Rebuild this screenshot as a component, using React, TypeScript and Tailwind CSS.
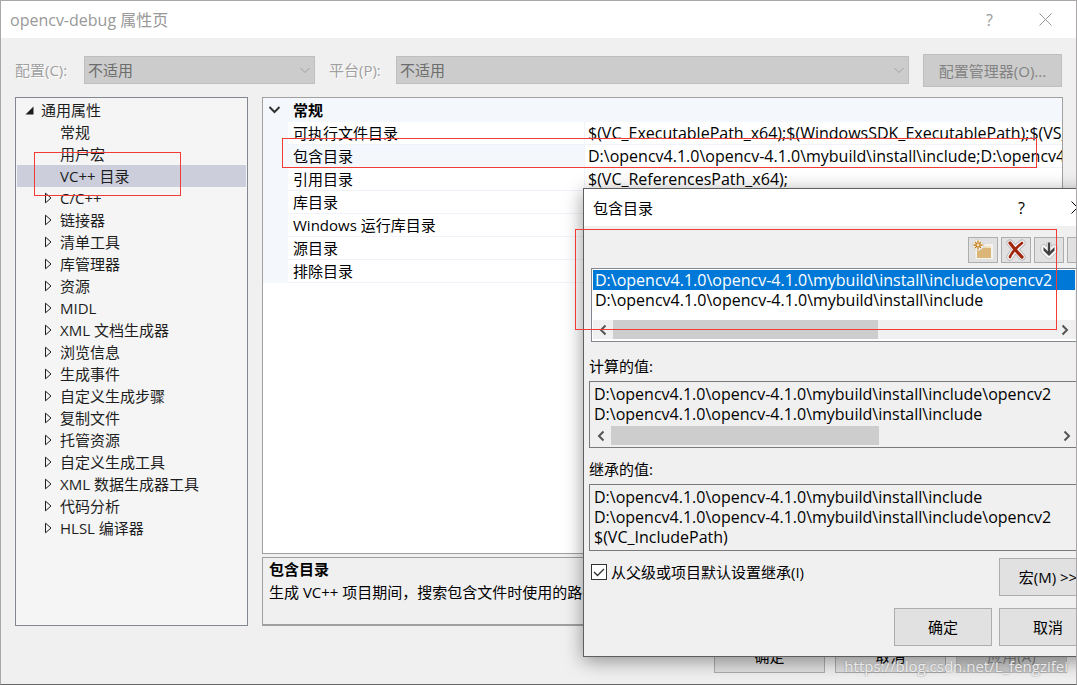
import React, { useState } from 'react';
import clsx from 'clsx';

const TREE_ITEMS = [
  { label: '常规', leaf: true },
  { label: '用户宏', leaf: true },
  { label: 'VC++ 目录', leaf: true },
  { label: 'C/C++' },
  { label: '链接器' },
  { label: '清单工具' },
  { label: '库管理器' },
  { label: '资源' },
  { label: 'MIDL' },
  { label: 'XML 文档生成器' },
  { label: '浏览信息' },
  { label: '生成事件' },
  { label: '自定义生成步骤' },
  { label: '复制文件' },
  { label: '托管资源' },
  { label: '自定义生成工具' },
  { label: 'XML 数据生成器工具' },
  { label: '代码分析' },
  { label: 'HLSL 编译器' },
];

const INCLUDE = 'D:\\opencv4.1.0\\opencv-4.1.0\\mybuild\\install\\include';
const INCLUDE_CV2 = `${INCLUDE}\\opencv2`;

const PROPERTIES = [
  { name: '可执行文件目录', value: '$(VC_ExecutablePath_x64);$(WindowsSDK_ExecutablePath);$(VS_ExecutablePath)' },
  { name: '包含目录', value: `${INCLUDE};${INCLUDE_CV2}` },
  { name: '引用目录', value: '$(VC_ReferencesPath_x64);' },
  { name: '库目录', value: '' },
  { name: 'Windows 运行库目录', value: '' },
  { name: '源目录', value: '' },
  { name: '排除目录', value: '' },
];

const CloseIcon = () => (
  <svg width="13" height="13" viewBox="0 0 13 13" fill="none" stroke="currentColor">
    <path d="M0.5 0.5l12 12M12.5 0.5l-12 12" />
  </svg>
);

const FolderIcon = () => (
  <svg width="22" height="22" viewBox="0 0 22 22">
    <path d="M3 8h9l1-3h8v15H4z" fill="#f6f3ee" />
    <path d="M5 9h7l2-2h5v12H5z" fill="#dcb679" />
    <path d="M14 7h5v2h-6z" fill="#f3e2c2" />
    <circle cx="6" cy="6" r="5.5" fill="#f6f3ee" stroke="#c9c4bb" strokeWidth="0.6" />
    <path d="M6 1.5v9M1.5 6h9M3 3l6 6M9 3L3 9" stroke="#c27d1a" strokeWidth="1.3" />
    <circle cx="6" cy="6" r="1.4" fill="#f6e3c0" />
  </svg>
);

const DeleteIcon = () => (
  <svg width="22" height="22" viewBox="0 0 22 22" fill="none" strokeLinecap="round">
    <path d="M5 4l12 14M17 4C12 8 8 12 5 18" stroke="#b5b5b5" strokeWidth="7" />
    <path d="M5 4l12 14M17 4C12 8 8 12 5 18" stroke="#f5f5f5" strokeWidth="5.4" />
    <path d="M5 4c3 4 7 9 12 14" stroke="#a1260d" strokeWidth="3.2" />
    <path d="M17 4C12 8 7 12 5 18" stroke="#a1260d" strokeWidth="2.6" />
  </svg>
);

const ArrowDownIcon = () => (
  <svg width="18" height="22" viewBox="0 0 18 22">
    <path
      d="M9 4v11M3.5 8.5v3L9 17l5.5-5.5v-3L9 14z"
      fill="#f5f5f5"
      stroke="#b5b5b5"
      strokeWidth="6"
      strokeLinejoin="round"
    />
    <path d="M9 4v11M3.5 8.5v3L9 17l5.5-5.5v-3L9 14z" fill="#f5f5f5" stroke="#f5f5f5" strokeWidth="4.6" strokeLinejoin="round" />
    <path d="M9 3.5v11" stroke="#424242" strokeWidth="2.4" />
    <path d="M3.5 8v3.5L9 17l5.5-5.5V8L9 13.5z" fill="#424242" />
  </svg>
);

const ArrowUpIcon = () => (
  <svg width="16" height="22" viewBox="0 0 16 22" fill="none">
    <path d="M8 19V7" stroke="#c0c0c0" strokeWidth="2.2" />
    <path d="M3 14v-3l5-5 5 5v3L8 9z" fill="#c0c0c0" />
  </svg>
);

const Chevron: React.FC<{ d: string }> = ({ d }) => (
  <svg width="10" height="12" viewBox="0 0 10 12" fill="none" stroke="#555" strokeWidth="2">
    <path d={d} />
  </svg>
);

const DisabledSelect: React.FC<{ id: string; className?: string }> = ({ id, className }) => (
  <div className={clsx('relative mt-[2px]', className)}>
    <select
      id={id}
      disabled
      className="block h-7 w-full appearance-none border border-[#bfbfbf] bg-[#cccccc] pl-[3px] text-[#6d6d6d] opacity-100"
    >
      <option>不适用</option>
    </select>
    <svg className="absolute right-1 top-2" width="12" height="12" viewBox="0 0 12 12" fill="none" stroke="#a0a0a0">
      <path d="M1.5 4l4.5 4.5L10.5 4" />
    </svg>
  </div>
);

const DialogButton: React.FC<React.ButtonHTMLAttributes<HTMLButtonElement>> = ({ className, ...props }) => (
  <button
    type="button"
    className={clsx('shrink-0 border border-[#adadad] bg-[#e1e1e1] whitespace-nowrap', className)}
    {...props}
  />
);

const ScrollBar = () => (
  <div className="flex h-[19px] items-center bg-[#f0f0f0]">
    <span className="flex w-5 justify-center"><Chevron d="M7.5 1.5L3 6l4.5 4.5" /></span>
    <div className="flex h-full flex-1">
      <div className="h-full w-3/5 bg-[#cdcdcd]" />
    </div>
    <span className="flex w-5 justify-center"><Chevron d="M2.5 1.5L7 6l-4.5 4.5" /></span>
  </div>
);

const IncludeDialog = () => {
  const [selected, setSelected] = useState(0);
  const [inherit, setInherit] = useState(true);

  return (
    <section className="absolute left-[582px] top-[187px] w-[524px] border border-[#5f5f5f] bg-[#f0f0f0] shadow-[0_4px_18px_rgba(0,0,0,0.4)]">
      <header className="flex h-[37px] items-center bg-white pl-[9px] pr-[22px]">
        <h2 className="flex-1">包含目录</h2>
        <button type="button" aria-label="帮助" className="mr-[46px] text-base">?</button>
        <button type="button" aria-label="关闭"><CloseIcon /></button>
      </header>

      <div className="pl-[5px] pr-[9px]">
        {/* Toolbar */}
        <div className="flex justify-end gap-[3px] pt-[11px] pb-[5px]">
          {[FolderIcon, DeleteIcon, ArrowDownIcon, ArrowUpIcon].map((Icon, i) => (
            <DialogButton
              key={i}
              aria-label={['新行', '删除', '下移', '上移'][i]}
              className="flex h-[26px] w-[30px] items-center justify-center"
            >
              <Icon />
            </DialogButton>
          ))}
        </div>

        {/* Editable list */}
        <div className="ml-[2px] flex h-[74px] border border-[#828790] bg-white p-px pb-[2px]">
          <div className="flex min-w-0 flex-1 flex-col justify-between">
            <ul role="listbox" aria-label="包含目录">
              {[INCLUDE_CV2, INCLUDE].map((path, i) => (
                <li
                  key={path}
                  role="option"
                  aria-selected={selected === i}
                  onClick={() => setSelected(i)}
                  className={clsx('h-5 pl-[2px] text-base leading-5 whitespace-nowrap', selected === i && 'bg-[#0078d7] text-white')}
                >
                  {path}
                </li>
              ))}
            </ul>
            <ScrollBar />
          </div>
          <div className="w-5 bg-[#f0f0f0]" />
        </div>

        <label htmlFor="evaluated" className="mt-[13px] block leading-[22px]">计算的值:</label>
        <div className="mt-1 flex h-[67px] border border-[#7a7a7a] p-px">
          <div className="flex min-w-0 flex-1 flex-col">
            <textarea
              id="evaluated"
              readOnly
              wrap="off"
              rows={2}
              className="h-[43px] resize-none overflow-hidden bg-transparent pl-[3px] pt-px text-base leading-5"
              value={`${INCLUDE_CV2}\n${INCLUDE}`}
            />
            <ScrollBar />
          </div>
          <div className="w-[18px] bg-[#f0f0f0]" />
        </div>

        <label htmlFor="inherited" className="mt-[10px] block leading-[22px]">继承的值:</label>
        <div className="mt-1 h-[67px] border border-[#7a7a7a] p-px">
          <textarea
            id="inherited"
            readOnly
            wrap="off"
            rows={3}
            className="block size-full resize-none overflow-hidden bg-transparent pl-[3px] pt-px text-base leading-5"
            value={`${INCLUDE}\n${INCLUDE_CV2}\n$(VC_IncludePath)`}
          />
        </div>

        <div className="mt-[7px] flex items-start justify-between">
          <label className="relative ml-[2px] mt-1 flex items-center gap-1">
            <input
              type="checkbox"
              checked={inherit}
              onChange={(e) => setInherit(e.target.checked)}
              className="size-4 appearance-none border border-[#333] bg-white"
            />
            {inherit && (
              <svg className="pointer-events-none absolute left-0" width="16" height="16" viewBox="0 0 16 16" fill="none" stroke="#333" strokeWidth="1.4">
                <path d="M3 8l3.5 3.5L13 5" />
              </svg>
            )}
            从父级或项目默认设置继承(I)
          </label>
          <DialogButton className="h-[38px] w-[98px]">宏(M) &gt;&gt;</DialogButton>
        </div>

        <div className="mt-3 mb-[10px] flex justify-end gap-[7px]">
          <DialogButton className="h-[38px] w-[98px]">确定</DialogButton>
          <DialogButton className="h-[38px] w-[98px]">取消</DialogButton>
        </div>
      </div>
    </section>
  );
};

export default function App() {
  const [active, setActive] = useState('VC++ 目录');

  return (
    <div className="relative flex min-h-screen flex-col overflow-hidden border border-[#a9a7a7] border-b-[#666] bg-[#f0f0f0] font-['Open_Sans','Noto_Sans_CJK_SC',sans-serif] text-[15px] leading-5 text-black">
      {/* Title bar */}
      <header className="flex h-[37px] items-center bg-white pl-[9px] pr-6 text-[#999]">
        <h1 className="flex-1 text-base leading-5">opencv-debug 属性页</h1>
        <button type="button" aria-label="帮助" className="mr-[46px] text-base">?</button>
        <button type="button" aria-label="关闭"><CloseIcon /></button>
      </header>

      <main className="flex flex-1 flex-col px-[14px] pt-4">
        {/* Configuration row */}
        <div className="flex h-[33px] items-start text-[#a0a0a0]">
          <label htmlFor="config" className="w-[69px] leading-8 [text-shadow:1px_1px_0_#fff]">配置(C):</label>
          <DisabledSelect id="config" className="w-[231px]" />
          <label htmlFor="platform" className="ml-[14px] w-[67px] leading-8 [text-shadow:1px_1px_0_#fff]">平台(P):</label>
          <DisabledSelect id="platform" className="flex-1" />
          <button type="button" disabled className="ml-[14px] h-[33px] w-[139px] border border-[#bfbfbf] bg-[#cccccc] text-[#838383]">
            配置管理器(O)...
          </button>
        </div>

        <div className="mt-[10px] flex flex-1 gap-[14px]">
          {/* Category tree */}
          <nav className="w-[233px] border border-[#828790] bg-[#f5f5f5] p-px text-[#1e1e1e]">
            <div className="flex h-[22px] items-center pl-2">
              <svg width="9" height="9" viewBox="0 0 9 9"><path d="M8.5 0.5v8h-8z" fill="#1e1e1e" /></svg>
              <span className="ml-[7px]">通用属性</span>
            </div>
            <ul>
              {TREE_ITEMS.map(({ label, leaf }) => (
                <li key={label}>
                  <button
                    type="button"
                    onClick={() => setActive(label)}
                    className={clsx('flex h-[22px] w-full items-center pl-[27px]', active === label && 'bg-[#cccedb]')}
                  >
                    <span className="w-4">
                      {!leaf && (
                        <svg width="9" height="12" viewBox="0 0 9 12" fill="none" stroke="#1e1e1e">
                          <path d="M1.5 1.2v9.6L7 6z" />
                        </svg>
                      )}
                    </span>
                    {label}
                  </button>
                </li>
              ))}
            </ul>
          </nav>

          {/* Property grid */}
          <div className="-mr-px flex min-w-0 flex-1 flex-col gap-[3px]">
            <div className="flex-1 overflow-hidden border border-[#a0a0a0] bg-white">
              <table className="w-full table-fixed border-separate border-spacing-0 text-left whitespace-nowrap">
                <colgroup>
                  <col className="w-[25px]" />
                  <col className="w-[297px]" />
                  <col />
                </colgroup>
                <thead>
                  <tr className="h-6 bg-[#f4f7fc]">
                    <th className="p-0 pl-[5px]">
                      <svg width="13" height="8" viewBox="0 0 13 8" fill="none" stroke="#333" strokeWidth="2">
                        <path d="M1.5 1l5 5 5-5" />
                      </svg>
                    </th>
                    <th colSpan={2} className="p-0 pl-[5px] font-bold">常规</th>
                  </tr>
                </thead>
                <tbody>
                  {PROPERTIES.map(({ name, value }) => (
                    <tr key={name} className="h-[23px]">
                      <td className="bg-[#f4f7fc] p-0" />
                      <td className={clsx('border-r border-b border-[#f0f3fa] p-0 pl-[5px]', name === '包含目录' && 'bg-[#f4f7fc]')}>{name}</td>
                      <td className="overflow-hidden border-b border-[#f0f3fa] p-0 pl-[3px] text-base leading-5">{value}</td>
                    </tr>
                  ))}
                </tbody>
              </table>
            </div>
            <div className="h-[69px] overflow-hidden border border-b-2 border-[#a0a0a0] pl-[6px] whitespace-nowrap">
              <h3 className="font-bold leading-[23px]">包含目录</h3>
              <p className="leading-[23px]">生成 VC++ 项目期间，搜索包含文件时使用的路径。</p>
            </div>
          </div>
        </div>

        <footer className="mt-[13px] mb-[11px] -mr-[5px] flex justify-end gap-[10px]">
          <DialogButton className="h-[34px] w-[111px]">确定</DialogButton>
          <DialogButton className="h-[34px] w-[111px]">取消</DialogButton>
          <button type="button" disabled className="h-[34px] w-[111px] border border-[#bfbfbf] bg-[#cccccc] text-[#838383]">应用(A)</button>
        </footer>
      </main>

      <IncludeDialog />

      {/* Highlight frames */}
      <div className="pointer-events-none absolute left-[33px] top-[151px] h-[44px] w-[147px] border border-[#f23a37]" />
      <div className="pointer-events-none absolute left-[281px] top-[137px] h-[30px] w-[755px] border border-[#f23a37]" />
      <div className="pointer-events-none absolute left-[574px] top-[228px] h-[101px] w-[482px] border border-[#f23a37]" />

      <p className="pointer-events-none absolute right-2 bottom-2 text-[15px] text-white/80 [text-shadow:0_0_2px_#777]">
        https://blog.csdn.net/L_fengzifei
      </p>
    </div>
  );
}
